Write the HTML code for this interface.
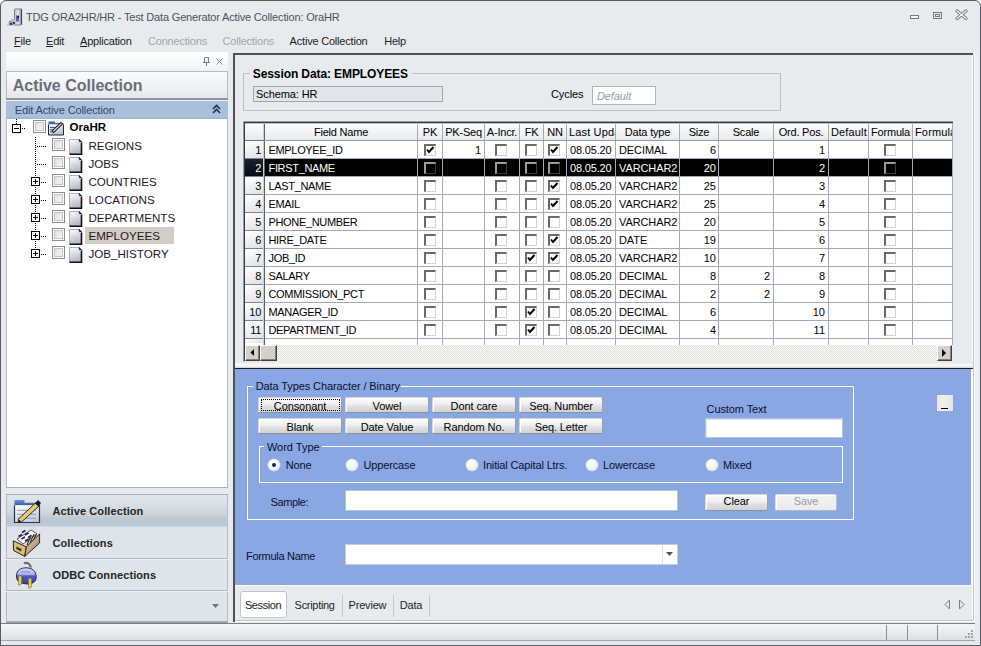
<!DOCTYPE html>
<html><head><meta charset="utf-8"><style>
html,body{margin:0;padding:0;width:981px;height:646px;overflow:hidden;background:#fff}
body{position:relative;font-family:"Liberation Sans", sans-serif}
body div{position:absolute;white-space:nowrap}
u{text-decoration:underline;text-underline-offset:1px}
</style></head><body>
<div style="left:0;top:0;width:979px;height:644px;border:1px solid #585c62;border-radius:6px 6px 0 0;background:#e8ebee"></div>
<svg style="position:absolute;left:4px;top:6px" width="22" height="22" viewBox="0 0 22 22">
<defs><linearGradient id="tig" x1="0" y1="0" x2="1" y2="0"><stop offset="0" stop-color="#b8bcc4"/><stop offset="0.5" stop-color="#e6e8ec"/><stop offset="1" stop-color="#9a9ea8"/></linearGradient></defs>
<path d="M10.5 3.5 L11.5 3 H17.5 V18.5 L16.5 19 H10.5 Z" fill="url(#tig)" stroke="#7a7e86" stroke-width="1"/>
<path d="M17.5 3.5 V18.5" stroke="#404450" stroke-width="1.2"/>
<path d="M12 9.5 H15 V15.5 H12 Z" fill="#5a4ab8" opacity="0.9"/>
<path d="M13.5 10 H15 V12 H13.5 Z" fill="#1a1440"/>
<path d="M3 18 L6 14 H11 V20 H3 Z" fill="#c8ccc8"/>
<path d="M5 15 H10 V19 H5 Z" fill="#8a94a8"/>
<path d="M7 13 H11 V16 H7 Z" fill="#a8c0d8"/>
<path d="M6 17 H8 V19 H6 Z M9 16 H11 V18 H9 Z" fill="#3a4050"/>
</svg>
<div style="left:26px;top:11.69px;font-size:11px;line-height:11px;color:#4c5160;letter-spacing:-0.17px;">TDG ORA2HR/HR - Test Data Generator Active Collection: OraHR</div>
<svg style="position:absolute;left:905px;top:8px" width="70" height="14" viewBox="0 0 70 14">
<rect x="5.5" y="7.5" width="8" height="3" fill="#fff" stroke="#767a82" stroke-width="1"/>
<rect x="28.5" y="4.5" width="8" height="6" fill="none" stroke="#767a82" stroke-width="1"/>
<rect x="30.5" y="6.5" width="4" height="2" fill="none" stroke="#767a82" stroke-width="1"/>
<path d="M52 3 L61 10.5 M61 3 L52 10.5" stroke="#7a7e86" stroke-width="3.2" stroke-linecap="round"/>
<path d="M52 3 L61 10.5 M61 3 L52 10.5" stroke="#f4f5f6" stroke-width="1.2" stroke-linecap="round"/>
</svg>
<div style="left:14px;top:35.69px;font-size:11px;line-height:11px;color:#1c1c1c;letter-spacing:-0.2px;"><u>F</u>ile</div>
<div style="left:46px;top:35.69px;font-size:11px;line-height:11px;color:#1c1c1c;letter-spacing:-0.2px;"><u>E</u>dit</div>
<div style="left:80px;top:35.69px;font-size:11px;line-height:11px;color:#1c1c1c;letter-spacing:-0.2px;"><u>A</u>pplication</div>
<div style="left:148px;top:35.69px;font-size:11px;line-height:11px;color:#a2a6ac;letter-spacing:-0.2px;">Connections</div>
<div style="left:222.5px;top:35.69px;font-size:11px;line-height:11px;color:#a2a6ac;letter-spacing:-0.2px;">Collections</div>
<div style="left:289.6px;top:35.69px;font-size:11px;line-height:11px;color:#1c1c1c;letter-spacing:-0.2px;">Active Collection</div>
<div style="left:384.2px;top:35.69px;font-size:11px;line-height:11px;color:#1c1c1c;letter-spacing:-0.2px;">Help</div>
<div style="left:6px;top:52px;width:222px;height:19px;background:linear-gradient(#ffffff,#f6f7f9 60%,#eef0f3)"></div>
<svg style="position:absolute;left:202px;top:57px" width="24" height="10" viewBox="0 0 24 10">
<path d="M2.5 0.5 H6.5 V5.5 H2.5 Z" fill="none" stroke="#7a7e86"/>
<path d="M1 5.5 H8" stroke="#7a7e86"/>
<path d="M4.5 6 V9" stroke="#7a7e86"/>
<path d="M14.5 1.5 L20.5 7.5 M20.5 1.5 L14.5 7.5" stroke="#8a8e96" stroke-width="1"/>
</svg>
<div style="left:6px;top:71px;width:220px;height:27px;border:1px solid #b6bbc2;border-bottom:none;background:linear-gradient(#fbfbfc,#eef0f3 60%,#e2e5e9)"></div>
<div style="left:12.7px;top:78.46px;font-size:16px;line-height:16px;color:#6a6e78;font-weight:bold;">Active Collection</div>
<div style="left:6px;top:98px;width:222px;height:2px;background:linear-gradient(#9aa0a8,#80868e)"></div>
<div style="left:6px;top:100px;width:222px;height:1px;background:#f4f8fc"></div>
<div style="left:6px;top:101px;width:222px;height:18px;background:linear-gradient(#a2bad8,#a9c0dc 8%,#a9c0dc 85%,#9fb6d4)"></div>
<div style="left:14.7px;top:104.69px;font-size:11px;line-height:11px;color:#34466c;letter-spacing:-0.12px;">Edit Active Collection</div>
<svg style="position:absolute;left:212px;top:104px" width="10" height="10" viewBox="0 0 10 10">
<path d="M1 5 L4.5 1.5 L8 5 M1 9 L4.5 5.5 L8 9" fill="none" stroke="#1e2e4e" stroke-width="1.6"/>
</svg>
<div style="left:6px;top:119px;width:222px;height:368px;background:#fff;border-left:1px solid #b8bcc2;border-right:1px solid #b8bcc2;box-sizing:border-box"></div>
<div style="left:16px;top:119px;width:1px;height:5px;background:repeating-linear-gradient(#000 0 1px,transparent 1px 2px)"></div>
<div style="left:12px;top:124px;width:7px;height:7px;border:1px solid #000;background:#fff"></div>
<div style="left:14px;top:128px;width:5px;height:1px;background:#000"></div>
<div style="left:22px;top:128px;width:4px;height:1px;background:repeating-linear-gradient(90deg,#000 0 1px,transparent 1px 2px)"></div>
<div style="left:33px;top:120px;width:11px;height:11px;border:1px solid #8e8e8e;background:#fdfdfd"></div>
<div style="left:35px;top:122px;width:7px;height:7px;border:1px solid #c4c4c4;background:linear-gradient(135deg,#e2e2e4,#f4f4f6)"></div>
<svg style="position:absolute;left:48px;top:121px" width="17" height="15" viewBox="0 0 17 15">
<defs><linearGradient id="rtg" x1="0" y1="0" x2="0.5" y2="1"><stop offset="0" stop-color="#ffffff"/><stop offset="1" stop-color="#b8c2d6"/></linearGradient></defs>
<path d="M0.5 0.5 H7 V2 H15.5 V3.5 H0.5 Z" fill="#3f64a8"/>
<rect x="0.5" y="3.5" width="15" height="10.5" fill="url(#rtg)"/>
<path d="M0.5 3.5 V14 H15.5 V3.5" fill="none" stroke="#1e2640" stroke-width="1"/>
<path d="M2 6.5 H9 M2 8.7 H8 M2 10.8 H7" stroke="#4a5a80" stroke-width="1"/>
<path d="M4.5 11 L14 2" stroke="#202020" stroke-width="3.2"/>
<path d="M5.2 10.3 L13.4 2.6" stroke="#e2dcaa" stroke-width="1.3"/>
</svg>
<div style="left:69.5px;top:122.27px;font-size:11.5px;line-height:11.5px;color:#000;font-weight:bold;letter-spacing:0.05px;">OraHR</div>
<div style="left:35px;top:137px;width:1px;height:117px;background:repeating-linear-gradient(#000 0 1px,transparent 1px 2px)"></div>
<div style="left:37px;top:146px;width:10px;height:1px;background:repeating-linear-gradient(90deg,#000 0 1px,transparent 1px 2px)"></div>
<div style="left:52px;top:138px;width:11px;height:11px;border:1px solid #8e8e8e;background:#fdfdfd"></div>
<div style="left:54px;top:140px;width:7px;height:7px;border:1px solid #c4c4c4;background:linear-gradient(135deg,#e2e2e4,#f4f4f6)"></div>
<svg style="position:absolute;left:69px;top:139px" width="14" height="16" viewBox="0 0 14 16">
<defs><linearGradient id="dg69139" x1="0" y1="0" x2="0.3" y2="1"><stop offset="0" stop-color="#ffffff"/><stop offset="1" stop-color="#b4bac8"/></linearGradient></defs>
<path d="M0.5 0.5 H9.5 L12.5 3.5 V15 H0.5 Z" fill="url(#dg69139)"/>
<path d="M0.5 15 V0.5 H9.5" fill="none" stroke="#b0b0b4" stroke-width="1"/>
<path d="M9.5 0.5 L12.5 3.5 V15.2 H0.5" fill="none" stroke="#101018" stroke-width="1.6"/>
<path d="M9.5 0.5 V3.5 H12.5" fill="none" stroke="#c8ccd8" stroke-width="1"/>
</svg>
<div style="left:88.4px;top:140.18px;font-size:11.6px;line-height:11.6px;color:#1e1626;letter-spacing:0.02px;">REGIONS</div>
<div style="left:37px;top:164px;width:10px;height:1px;background:repeating-linear-gradient(90deg,#000 0 1px,transparent 1px 2px)"></div>
<div style="left:52px;top:156px;width:11px;height:11px;border:1px solid #8e8e8e;background:#fdfdfd"></div>
<div style="left:54px;top:158px;width:7px;height:7px;border:1px solid #c4c4c4;background:linear-gradient(135deg,#e2e2e4,#f4f4f6)"></div>
<svg style="position:absolute;left:69px;top:157px" width="14" height="16" viewBox="0 0 14 16">
<defs><linearGradient id="dg69157" x1="0" y1="0" x2="0.3" y2="1"><stop offset="0" stop-color="#ffffff"/><stop offset="1" stop-color="#b4bac8"/></linearGradient></defs>
<path d="M0.5 0.5 H9.5 L12.5 3.5 V15 H0.5 Z" fill="url(#dg69157)"/>
<path d="M0.5 15 V0.5 H9.5" fill="none" stroke="#b0b0b4" stroke-width="1"/>
<path d="M9.5 0.5 L12.5 3.5 V15.2 H0.5" fill="none" stroke="#101018" stroke-width="1.6"/>
<path d="M9.5 0.5 V3.5 H12.5" fill="none" stroke="#c8ccd8" stroke-width="1"/>
</svg>
<div style="left:88.4px;top:158.18px;font-size:11.6px;line-height:11.6px;color:#1e1626;letter-spacing:0.02px;">JOBS</div>
<div style="left:31px;top:177px;width:7px;height:7px;border:1px solid #000;background:#fff"></div>
<div style="left:33px;top:181px;width:5px;height:1px;background:#000"></div>
<div style="left:35px;top:179px;width:1px;height:5px;background:#000"></div>
<div style="left:41px;top:182px;width:6px;height:1px;background:repeating-linear-gradient(90deg,#000 0 1px,transparent 1px 2px)"></div>
<div style="left:52px;top:174px;width:11px;height:11px;border:1px solid #8e8e8e;background:#fdfdfd"></div>
<div style="left:54px;top:176px;width:7px;height:7px;border:1px solid #c4c4c4;background:linear-gradient(135deg,#e2e2e4,#f4f4f6)"></div>
<svg style="position:absolute;left:69px;top:175px" width="14" height="16" viewBox="0 0 14 16">
<defs><linearGradient id="dg69175" x1="0" y1="0" x2="0.3" y2="1"><stop offset="0" stop-color="#ffffff"/><stop offset="1" stop-color="#b4bac8"/></linearGradient></defs>
<path d="M0.5 0.5 H9.5 L12.5 3.5 V15 H0.5 Z" fill="url(#dg69175)"/>
<path d="M0.5 15 V0.5 H9.5" fill="none" stroke="#b0b0b4" stroke-width="1"/>
<path d="M9.5 0.5 L12.5 3.5 V15.2 H0.5" fill="none" stroke="#101018" stroke-width="1.6"/>
<path d="M9.5 0.5 V3.5 H12.5" fill="none" stroke="#c8ccd8" stroke-width="1"/>
</svg>
<div style="left:88.4px;top:176.18px;font-size:11.6px;line-height:11.6px;color:#1e1626;letter-spacing:0.02px;">COUNTRIES</div>
<div style="left:31px;top:195px;width:7px;height:7px;border:1px solid #000;background:#fff"></div>
<div style="left:33px;top:199px;width:5px;height:1px;background:#000"></div>
<div style="left:35px;top:197px;width:1px;height:5px;background:#000"></div>
<div style="left:41px;top:200px;width:6px;height:1px;background:repeating-linear-gradient(90deg,#000 0 1px,transparent 1px 2px)"></div>
<div style="left:52px;top:192px;width:11px;height:11px;border:1px solid #8e8e8e;background:#fdfdfd"></div>
<div style="left:54px;top:194px;width:7px;height:7px;border:1px solid #c4c4c4;background:linear-gradient(135deg,#e2e2e4,#f4f4f6)"></div>
<svg style="position:absolute;left:69px;top:193px" width="14" height="16" viewBox="0 0 14 16">
<defs><linearGradient id="dg69193" x1="0" y1="0" x2="0.3" y2="1"><stop offset="0" stop-color="#ffffff"/><stop offset="1" stop-color="#b4bac8"/></linearGradient></defs>
<path d="M0.5 0.5 H9.5 L12.5 3.5 V15 H0.5 Z" fill="url(#dg69193)"/>
<path d="M0.5 15 V0.5 H9.5" fill="none" stroke="#b0b0b4" stroke-width="1"/>
<path d="M9.5 0.5 L12.5 3.5 V15.2 H0.5" fill="none" stroke="#101018" stroke-width="1.6"/>
<path d="M9.5 0.5 V3.5 H12.5" fill="none" stroke="#c8ccd8" stroke-width="1"/>
</svg>
<div style="left:88.4px;top:194.18px;font-size:11.6px;line-height:11.6px;color:#1e1626;letter-spacing:0.02px;">LOCATIONS</div>
<div style="left:31px;top:213px;width:7px;height:7px;border:1px solid #000;background:#fff"></div>
<div style="left:33px;top:217px;width:5px;height:1px;background:#000"></div>
<div style="left:35px;top:215px;width:1px;height:5px;background:#000"></div>
<div style="left:41px;top:218px;width:6px;height:1px;background:repeating-linear-gradient(90deg,#000 0 1px,transparent 1px 2px)"></div>
<div style="left:52px;top:210px;width:11px;height:11px;border:1px solid #8e8e8e;background:#fdfdfd"></div>
<div style="left:54px;top:212px;width:7px;height:7px;border:1px solid #c4c4c4;background:linear-gradient(135deg,#e2e2e4,#f4f4f6)"></div>
<svg style="position:absolute;left:69px;top:211px" width="14" height="16" viewBox="0 0 14 16">
<defs><linearGradient id="dg69211" x1="0" y1="0" x2="0.3" y2="1"><stop offset="0" stop-color="#ffffff"/><stop offset="1" stop-color="#b4bac8"/></linearGradient></defs>
<path d="M0.5 0.5 H9.5 L12.5 3.5 V15 H0.5 Z" fill="url(#dg69211)"/>
<path d="M0.5 15 V0.5 H9.5" fill="none" stroke="#b0b0b4" stroke-width="1"/>
<path d="M9.5 0.5 L12.5 3.5 V15.2 H0.5" fill="none" stroke="#101018" stroke-width="1.6"/>
<path d="M9.5 0.5 V3.5 H12.5" fill="none" stroke="#c8ccd8" stroke-width="1"/>
</svg>
<div style="left:88.4px;top:212.18px;font-size:11.6px;line-height:11.6px;color:#1e1626;letter-spacing:0.02px;">DEPARTMENTS</div>
<div style="left:31px;top:231px;width:7px;height:7px;border:1px solid #000;background:#fff"></div>
<div style="left:33px;top:235px;width:5px;height:1px;background:#000"></div>
<div style="left:35px;top:233px;width:1px;height:5px;background:#000"></div>
<div style="left:41px;top:236px;width:6px;height:1px;background:repeating-linear-gradient(90deg,#000 0 1px,transparent 1px 2px)"></div>
<div style="left:52px;top:228px;width:11px;height:11px;border:1px solid #8e8e8e;background:#fdfdfd"></div>
<div style="left:54px;top:230px;width:7px;height:7px;border:1px solid #c4c4c4;background:linear-gradient(135deg,#e2e2e4,#f4f4f6)"></div>
<svg style="position:absolute;left:69px;top:229px" width="14" height="16" viewBox="0 0 14 16">
<defs><linearGradient id="dg69229" x1="0" y1="0" x2="0.3" y2="1"><stop offset="0" stop-color="#ffffff"/><stop offset="1" stop-color="#b4bac8"/></linearGradient></defs>
<path d="M0.5 0.5 H9.5 L12.5 3.5 V15 H0.5 Z" fill="url(#dg69229)"/>
<path d="M0.5 15 V0.5 H9.5" fill="none" stroke="#b0b0b4" stroke-width="1"/>
<path d="M9.5 0.5 L12.5 3.5 V15.2 H0.5" fill="none" stroke="#101018" stroke-width="1.6"/>
<path d="M9.5 0.5 V3.5 H12.5" fill="none" stroke="#c8ccd8" stroke-width="1"/>
</svg>
<div style="left:85px;top:227px;width:89px;height:17px;background:#d2cec6"></div>
<div style="left:88.4px;top:230.18px;font-size:11.6px;line-height:11.6px;color:#1e1626;letter-spacing:0.02px;">EMPLOYEES</div>
<div style="left:31px;top:249px;width:7px;height:7px;border:1px solid #000;background:#fff"></div>
<div style="left:33px;top:253px;width:5px;height:1px;background:#000"></div>
<div style="left:35px;top:251px;width:1px;height:5px;background:#000"></div>
<div style="left:41px;top:254px;width:6px;height:1px;background:repeating-linear-gradient(90deg,#000 0 1px,transparent 1px 2px)"></div>
<div style="left:52px;top:246px;width:11px;height:11px;border:1px solid #8e8e8e;background:#fdfdfd"></div>
<div style="left:54px;top:248px;width:7px;height:7px;border:1px solid #c4c4c4;background:linear-gradient(135deg,#e2e2e4,#f4f4f6)"></div>
<svg style="position:absolute;left:69px;top:247px" width="14" height="16" viewBox="0 0 14 16">
<defs><linearGradient id="dg69247" x1="0" y1="0" x2="0.3" y2="1"><stop offset="0" stop-color="#ffffff"/><stop offset="1" stop-color="#b4bac8"/></linearGradient></defs>
<path d="M0.5 0.5 H9.5 L12.5 3.5 V15 H0.5 Z" fill="url(#dg69247)"/>
<path d="M0.5 15 V0.5 H9.5" fill="none" stroke="#b0b0b4" stroke-width="1"/>
<path d="M9.5 0.5 L12.5 3.5 V15.2 H0.5" fill="none" stroke="#101018" stroke-width="1.6"/>
<path d="M9.5 0.5 V3.5 H12.5" fill="none" stroke="#c8ccd8" stroke-width="1"/>
</svg>
<div style="left:88.4px;top:248.18px;font-size:11.6px;line-height:11.6px;color:#1e1626;letter-spacing:0.02px;">JOB_HISTORY</div>
<div style="left:6px;top:487px;width:222px;height:135px;background:#dfe4ea;border-left:1px solid #b8bcc2;border-right:1px solid #b8bcc2;box-sizing:border-box"></div>
<div style="left:6px;top:487px;width:222px;height:7px;background:#e6e9ed"></div>
<div style="left:6px;top:487px;width:222px;height:1px;background:#a8aeb6"></div>
<div style="left:6px;top:494px;width:222px;height:1px;background:#a8aeb6"></div>
<div style="left:7px;top:495px;width:220px;height:32px;background:linear-gradient(#e2e6eb,#d6dde4 35%,#cdd5dd 60%,#c8cacc 68%,#b9c8d4 80%,#bccad6 97%,#dfe6ec)"></div>
<div style="left:6px;top:558px;width:222px;height:1px;background:#b0b6be"></div>
<div style="left:6px;top:559px;width:222px;height:1px;background:#eef2f6"></div>
<div style="left:6px;top:590px;width:222px;height:1px;background:#b0b6be"></div>
<div style="left:6px;top:591px;width:222px;height:1px;background:#eef2f6"></div>
<div style="left:6px;top:621px;width:222px;height:2px;background:linear-gradient(#b4bac2,#8c9298)"></div>
<div style="left:52.5px;top:505.69px;font-size:11px;line-height:11px;color:#242424;font-weight:bold;letter-spacing:0.1px;">Active Collection</div>
<div style="left:52.5px;top:537.69px;font-size:11px;line-height:11px;color:#242424;font-weight:bold;letter-spacing:0.1px;">Collections</div>
<div style="left:52.5px;top:569.69px;font-size:11px;line-height:11px;color:#242424;font-weight:bold;letter-spacing:0.1px;">ODBC Connections</div>
<svg style="position:absolute;left:13px;top:498px" width="28" height="26" viewBox="0 0 28 26">
<defs><linearGradient id="ic1" x1="0" y1="0" x2="0.6" y2="1"><stop offset="0" stop-color="#ffffff"/><stop offset="1" stop-color="#c4ccda"/></linearGradient>
<linearGradient id="ic1b" x1="0" y1="0" x2="0" y2="1"><stop offset="0" stop-color="#6a94d4"/><stop offset="1" stop-color="#3a5aa0"/></linearGradient></defs>
<path d="M1.5 2 H11.5 V4.7 H26.5 V7.3 H1.5 Z" fill="url(#ic1b)"/>
<rect x="1.5" y="7.3" width="25" height="17.2" fill="url(#ic1)"/>
<path d="M1.5 7.3 V24.5 H26.5 V7.3" fill="none" stroke="#2c3444" stroke-width="1.2"/>
<path d="M4 12.3 H23 M4 16.3 H23 M4 20.2 H23" stroke="#8a9cc0" stroke-width="1"/>
<path d="M5 21.5 L23 4.5 L26.5 7.5 L8.5 24 Z" fill="#e6cc6a" stroke="#2a2a2a" stroke-width="1"/>
<path d="M5 21.5 L8.5 24 L4.5 25 Z" fill="#2a2a2a"/>
<path d="M22 5.5 L25 2 L28 5 L25.5 8.5 Z" fill="#1a1a1a"/>
</svg>
<svg style="position:absolute;left:8px;top:526px" width="36" height="36" viewBox="0 0 36 36">
<defs><linearGradient id="ic2" x1="0" y1="0" x2="1" y2="1"><stop offset="0" stop-color="#dcc488"/><stop offset="0.5" stop-color="#c8a888"/><stop offset="1" stop-color="#7a68a0"/></linearGradient></defs>
<path d="M9 13 L23 4 L29 8 L15 18 Z" fill="#ffffff" stroke="#303040" stroke-width="0.8"/>
<path d="M10.5 10.5 L14 8.5 M14 6.5 L17.5 4.5 M13.5 13 L17 11 M17 9 L20.5 7 M17 15 L20.5 13 M20 11.5 L23.5 9.5" stroke="#202040" stroke-width="1.6"/>
<path d="M19 19 L23 9 M22 17 L26 8 M25 15 L28.5 8" stroke="#303030" stroke-width="1.2"/>
<path d="M5.3 14.8 L18.4 20.9 L16.7 30.4 L5.6 24.5 Z" fill="#dcbc78" stroke="#2a2418" stroke-width="1"/>
<path d="M18.4 20.9 L31.6 8 L31.6 17 L16.7 30.4 Z" fill="url(#ic2)" stroke="#2a2418" stroke-width="1"/>
<path d="M8.4 20.5 L13.4 23 L13.4 25.5 L8.4 23 Z" fill="#3a3020"/>
</svg>
<svg style="position:absolute;left:8px;top:558px" width="36" height="36" viewBox="0 0 36 36">
<defs><linearGradient id="ic3" x1="0" y1="0" x2="0" y2="1"><stop offset="0" stop-color="#d4d6f4"/><stop offset="0.4" stop-color="#b0b4e8"/><stop offset="0.5" stop-color="#5058c0"/><stop offset="1" stop-color="#3840a0"/></linearGradient></defs>
<path d="M16 5.5 C19 3.5 22 6 23 9.5" fill="none" stroke="#6a6e70" stroke-width="2.2"/>
<path d="M8.5 18 C8.5 12 13 9.8 18 9.8 C24 9.8 28.2 13 28.2 19 C28.2 23.5 25 26 19 26 L13 25 C10 24 8.5 22 8.5 18 Z" fill="url(#ic3)" stroke="#242870" stroke-width="1"/>
<path d="M13 14 H22" stroke="#8088c8" stroke-width="1"/>
<path d="M10.5 18 H13.5 V26 L12 27 H10.5 Z" fill="#e8d050" stroke="#8a7020" stroke-width="0.6"/>
<path d="M20.5 20.5 H23.5 V29 L22 30 H20.5 Z" fill="#e8d050" stroke="#8a7020" stroke-width="0.6"/>
</svg>
<svg style="position:absolute;left:212px;top:604px" width="8" height="5" viewBox="0 0 8 5"><path d="M0 0 H7 L3.5 4 Z" fill="#70747c"/></svg>
<div style="left:233px;top:53px;width:740px;height:569px;border-left:2px solid #4e5258;border-top:2px solid #4e5258;box-sizing:border-box;background:#e8ebee"></div>
<div style="left:972px;top:55px;width:1px;height:565px;background:#fbfbfc"></div>
<div style="left:973px;top:55px;width:1px;height:565px;background:#c2c4c8"></div>
<div style="left:974px;top:53px;width:1px;height:569px;background:#fbfbfc"></div>
<div style="left:975px;top:53px;width:4px;height:570px;background:#eceef1"></div>
<div style="left:235px;top:620px;width:738px;height:1px;background:#c2c4c8"></div>
<div style="left:235px;top:621px;width:740px;height:1px;background:#fbfbfc"></div>
<div style="left:243px;top:73px;width:538px;height:38px;border:1px solid #bcc0c6;box-sizing:border-box"></div>
<div style="left:250px;top:66px;width:162px;height:12px;background:#e8ebee"></div>
<div style="left:252.8px;top:67.84px;font-size:12px;line-height:12px;color:#000;font-weight:bold;letter-spacing:-0.1px;">Session Data: EMPLOYEES</div>
<div style="left:253px;top:86px;width:190px;height:16px;border:1px solid #a0a6ae;background:#e2e5e9;box-sizing:border-box"></div>
<div style="left:256px;top:88.69px;font-size:11px;line-height:11px;color:#000;letter-spacing:-0.1px;">Schema: HR</div>
<div style="left:551px;top:88.69px;font-size:11px;line-height:11px;color:#000;letter-spacing:-0.1px;">Cycles</div>
<div style="left:592px;top:86px;width:64px;height:19px;border:1px solid #b0b4ba;background:#fff;box-sizing:border-box"></div>
<div style="left:597px;top:90.69px;font-size:11px;line-height:11px;color:#9a9ea6;letter-spacing:-0.1px;"><i>Default</i></div>
<div style="left:244px;top:122px;width:709px;height:223px;background:#fff"></div>
<div style="left:245px;top:123px;width:707px;height:17px;background:linear-gradient(#ffffff,#f4f5f7 45%,#e6e9ec)"></div>
<div style="left:245px;top:141px;width:18px;height:17px;background:linear-gradient(160deg,#ffffff,#eef0f3 50%,#dde1e7)"></div>
<div style="left:245px;top:159px;width:18px;height:17px;background:linear-gradient(#1c2230,#080a10)"></div>
<div style="left:245px;top:177px;width:18px;height:17px;background:linear-gradient(160deg,#ffffff,#eef0f3 50%,#dde1e7)"></div>
<div style="left:245px;top:195px;width:18px;height:17px;background:linear-gradient(160deg,#ffffff,#eef0f3 50%,#dde1e7)"></div>
<div style="left:245px;top:213px;width:18px;height:17px;background:linear-gradient(160deg,#ffffff,#eef0f3 50%,#dde1e7)"></div>
<div style="left:245px;top:231px;width:18px;height:17px;background:linear-gradient(160deg,#ffffff,#eef0f3 50%,#dde1e7)"></div>
<div style="left:245px;top:249px;width:18px;height:17px;background:linear-gradient(160deg,#ffffff,#eef0f3 50%,#dde1e7)"></div>
<div style="left:245px;top:267px;width:18px;height:17px;background:linear-gradient(160deg,#ffffff,#eef0f3 50%,#dde1e7)"></div>
<div style="left:245px;top:285px;width:18px;height:17px;background:linear-gradient(160deg,#ffffff,#eef0f3 50%,#dde1e7)"></div>
<div style="left:245px;top:303px;width:18px;height:17px;background:linear-gradient(160deg,#ffffff,#eef0f3 50%,#dde1e7)"></div>
<div style="left:245px;top:321px;width:18px;height:17px;background:linear-gradient(160deg,#ffffff,#eef0f3 50%,#dde1e7)"></div>
<div style="left:245px;top:339px;width:18px;height:4px;background:linear-gradient(160deg,#ffffff,#eef0f3 50%,#dde1e7)"></div>
<div style="left:264px;top:159px;width:688px;height:17px;background:#000"></div>
<div style="left:264px;top:140px;width:688px;height:1px;background:#a4abb8"></div>
<div style="left:245px;top:140px;width:18px;height:1px;background:#7c8490"></div>
<div style="left:264px;top:158px;width:688px;height:1px;background:#a4abb8"></div>
<div style="left:245px;top:158px;width:18px;height:1px;background:#7c8490"></div>
<div style="left:264px;top:176px;width:688px;height:1px;background:#a4abb8"></div>
<div style="left:245px;top:176px;width:18px;height:1px;background:#7c8490"></div>
<div style="left:264px;top:194px;width:688px;height:1px;background:#a4abb8"></div>
<div style="left:245px;top:194px;width:18px;height:1px;background:#7c8490"></div>
<div style="left:264px;top:212px;width:688px;height:1px;background:#a4abb8"></div>
<div style="left:245px;top:212px;width:18px;height:1px;background:#7c8490"></div>
<div style="left:264px;top:230px;width:688px;height:1px;background:#a4abb8"></div>
<div style="left:245px;top:230px;width:18px;height:1px;background:#7c8490"></div>
<div style="left:264px;top:248px;width:688px;height:1px;background:#a4abb8"></div>
<div style="left:245px;top:248px;width:18px;height:1px;background:#7c8490"></div>
<div style="left:264px;top:266px;width:688px;height:1px;background:#a4abb8"></div>
<div style="left:245px;top:266px;width:18px;height:1px;background:#7c8490"></div>
<div style="left:264px;top:284px;width:688px;height:1px;background:#a4abb8"></div>
<div style="left:245px;top:284px;width:18px;height:1px;background:#7c8490"></div>
<div style="left:264px;top:302px;width:688px;height:1px;background:#a4abb8"></div>
<div style="left:245px;top:302px;width:18px;height:1px;background:#7c8490"></div>
<div style="left:264px;top:320px;width:688px;height:1px;background:#a4abb8"></div>
<div style="left:245px;top:320px;width:18px;height:1px;background:#7c8490"></div>
<div style="left:264px;top:338px;width:688px;height:1px;background:#a4abb8"></div>
<div style="left:245px;top:338px;width:18px;height:1px;background:#7c8490"></div>
<div style="left:417px;top:123px;width:1px;height:222px;background:#a4abb8"></div>
<div style="left:442px;top:123px;width:1px;height:222px;background:#a4abb8"></div>
<div style="left:484px;top:123px;width:1px;height:222px;background:#a4abb8"></div>
<div style="left:519px;top:123px;width:1px;height:222px;background:#a4abb8"></div>
<div style="left:543px;top:123px;width:1px;height:222px;background:#a4abb8"></div>
<div style="left:566px;top:123px;width:1px;height:222px;background:#a4abb8"></div>
<div style="left:615px;top:123px;width:1px;height:222px;background:#a4abb8"></div>
<div style="left:679px;top:123px;width:1px;height:222px;background:#a4abb8"></div>
<div style="left:718px;top:123px;width:1px;height:222px;background:#a4abb8"></div>
<div style="left:773px;top:123px;width:1px;height:222px;background:#a4abb8"></div>
<div style="left:828px;top:123px;width:1px;height:222px;background:#a4abb8"></div>
<div style="left:868px;top:123px;width:1px;height:222px;background:#a4abb8"></div>
<div style="left:912px;top:123px;width:1px;height:222px;background:#a4abb8"></div>
<div style="left:952px;top:123px;width:1px;height:222px;background:#a4abb8"></div>
<div style="left:263px;top:123px;width:1px;height:222px;background:#c8cdd6"></div>
<div style="left:264px;top:123px;width:1px;height:222px;background:#5a6270"></div>
<div style="left:245px;top:140px;width:19px;height:1px;background:#6c727c"></div>
<div style="left:264px;top:140px;width:688px;height:1px;background:#949ba6"></div>
<div style="left:243px;top:121px;width:710px;height:1px;background:#9a9ea4"></div>
<div style="left:243px;top:121px;width:1px;height:241px;background:#9a9ea4"></div>
<div style="left:244px;top:122px;width:709px;height:1px;background:#34383e"></div>
<div style="left:244px;top:122px;width:1px;height:239px;background:#34383e"></div>
<div style="left:245px;top:123px;width:707px;height:1px;background:#c0c4ca"></div>
<div style="left:265px;top:126.69px;font-size:11px;line-height:11px;color:#000;letter-spacing:-0.2px;white-space:nowrap;width:152px;text-align:center;">Field Name</div>
<div style="left:418px;top:126.69px;font-size:11px;line-height:11px;color:#000;letter-spacing:-0.2px;white-space:nowrap;width:24px;text-align:center;">PK</div>
<div style="left:443px;top:126.69px;font-size:11px;line-height:11px;color:#000;letter-spacing:-0.2px;white-space:nowrap;width:41px;text-align:center;">PK-Seq</div>
<div style="left:485px;top:126.69px;font-size:11px;line-height:11px;color:#000;letter-spacing:-0.2px;white-space:nowrap;width:34px;text-align:center;">A-Incr.</div>
<div style="left:520px;top:126.69px;font-size:11px;line-height:11px;color:#000;letter-spacing:-0.2px;white-space:nowrap;width:23px;text-align:center;">FK</div>
<div style="left:544px;top:126.69px;font-size:11px;line-height:11px;color:#000;letter-spacing:-0.2px;white-space:nowrap;width:22px;text-align:center;">NN</div>
<div style="left:567px;top:123px;width:48px;height:17px;overflow:hidden"><div style="left:2px;top:3.69px;font-size:11px;line-height:11px;color:#000;letter-spacing:0.15px;white-space:nowrap;">Last Update</div></div>
<div style="left:616px;top:126.69px;font-size:11px;line-height:11px;color:#000;letter-spacing:-0.2px;white-space:nowrap;width:63px;text-align:center;">Data type</div>
<div style="left:680px;top:126.69px;font-size:11px;line-height:11px;color:#000;letter-spacing:-0.2px;white-space:nowrap;width:38px;text-align:center;">Size</div>
<div style="left:719px;top:126.69px;font-size:11px;line-height:11px;color:#000;letter-spacing:-0.2px;white-space:nowrap;width:54px;text-align:center;">Scale</div>
<div style="left:774px;top:126.69px;font-size:11px;line-height:11px;color:#000;letter-spacing:-0.2px;white-space:nowrap;width:54px;text-align:center;">Ord. Pos.</div>
<div style="left:829px;top:123px;width:39px;height:17px;overflow:hidden"><div style="left:2px;top:3.69px;font-size:11px;line-height:11px;color:#000;letter-spacing:0.15px;white-space:nowrap;">Default</div></div>
<div style="left:869px;top:126.69px;font-size:11px;line-height:11px;color:#000;letter-spacing:-0.2px;white-space:nowrap;width:43px;text-align:center;">Formula</div>
<div style="left:913px;top:123px;width:39px;height:17px;overflow:hidden"><div style="left:2px;top:3.69px;font-size:11px;line-height:11px;color:#000;letter-spacing:0.15px;white-space:nowrap;">Formula</div></div>
<div style="left:245px;top:144.69px;font-size:11px;line-height:11px;color:#000;letter-spacing:-0.3px;white-space:nowrap;width:16px;text-align:right;">1</div>
<div style="left:268.5px;top:144.69px;font-size:11px;line-height:11px;color:#000;letter-spacing:-0.33px;white-space:nowrap;">EMPLOYEE_ID</div>
<div style="left:424px;top:144px;width:12px;height:12px;background:#fff;border-top:2px solid #6a6a6a;border-left:2px solid #6a6a6a;border-right:1px solid #d4d4d4;border-bottom:1px solid #d4d4d4;box-sizing:border-box"></div><svg style="position:absolute;left:424px;top:144px" width="12" height="12" viewBox="0 0 12 12"><path d="M3 5.5 L5 8 L9.5 3" fill="none" stroke="#000" stroke-width="2"/></svg>
<div style="left:442px;top:144.69px;font-size:11px;line-height:11px;color:#000;letter-spacing:0px;white-space:nowrap;width:39px;text-align:right;">1</div>
<div style="left:495px;top:144px;width:12px;height:12px;background:#fff;border-top:2px solid #6a6a6a;border-left:2px solid #6a6a6a;border-right:1px solid #d4d4d4;border-bottom:1px solid #d4d4d4;box-sizing:border-box"></div>
<div style="left:525px;top:144px;width:12px;height:12px;background:#fff;border-top:2px solid #6a6a6a;border-left:2px solid #6a6a6a;border-right:1px solid #d4d4d4;border-bottom:1px solid #d4d4d4;box-sizing:border-box"></div>
<div style="left:548px;top:144px;width:12px;height:12px;background:#fff;border-top:2px solid #6a6a6a;border-left:2px solid #6a6a6a;border-right:1px solid #d4d4d4;border-bottom:1px solid #d4d4d4;box-sizing:border-box"></div><svg style="position:absolute;left:548px;top:144px" width="12" height="12" viewBox="0 0 12 12"><path d="M3 5.5 L5 8 L9.5 3" fill="none" stroke="#000" stroke-width="2"/></svg>
<div style="left:570px;top:144.69px;font-size:11px;line-height:11px;color:#000;letter-spacing:-0.17px;white-space:nowrap;">08.05.20</div>
<div style="left:616px;top:141px;width:63px;height:17px;overflow:hidden"><div style="left:3px;top:3.69px;font-size:11px;line-height:11px;color:#000;letter-spacing:-0.1px;white-space:nowrap;">DECIMAL</div></div>
<div style="left:679px;top:144.69px;font-size:11px;line-height:11px;color:#000;letter-spacing:0px;white-space:nowrap;width:37px;text-align:right;">6</div>
<div style="left:773px;top:144.69px;font-size:11px;line-height:11px;color:#000;letter-spacing:0px;white-space:nowrap;width:52px;text-align:right;">1</div>
<div style="left:884px;top:144px;width:12px;height:12px;background:#fff;border-top:2px solid #6a6a6a;border-left:2px solid #6a6a6a;border-right:1px solid #d4d4d4;border-bottom:1px solid #d4d4d4;box-sizing:border-box"></div>
<div style="left:245px;top:162.69px;font-size:11px;line-height:11px;color:#fff;letter-spacing:-0.3px;white-space:nowrap;width:16px;text-align:right;">2</div>
<div style="left:268.5px;top:162.69px;font-size:11px;line-height:11px;color:#fff;letter-spacing:-0.33px;white-space:nowrap;">FIRST_NAME</div>
<div style="left:424px;top:162px;width:12px;height:12px;background:#000;border-top:2px solid #9a9a9a;border-left:2px solid #9a9a9a;border-right:1px solid #3a3a3a;border-bottom:1px solid #3a3a3a;box-sizing:border-box"></div>
<div style="left:495px;top:162px;width:12px;height:12px;background:#000;border-top:2px solid #9a9a9a;border-left:2px solid #9a9a9a;border-right:1px solid #3a3a3a;border-bottom:1px solid #3a3a3a;box-sizing:border-box"></div>
<div style="left:525px;top:162px;width:12px;height:12px;background:#000;border-top:2px solid #9a9a9a;border-left:2px solid #9a9a9a;border-right:1px solid #3a3a3a;border-bottom:1px solid #3a3a3a;box-sizing:border-box"></div>
<div style="left:548px;top:162px;width:12px;height:12px;background:#000;border-top:2px solid #9a9a9a;border-left:2px solid #9a9a9a;border-right:1px solid #3a3a3a;border-bottom:1px solid #3a3a3a;box-sizing:border-box"></div>
<div style="left:570px;top:162.69px;font-size:11px;line-height:11px;color:#fff;letter-spacing:-0.17px;white-space:nowrap;">08.05.20</div>
<div style="left:616px;top:159px;width:63px;height:17px;overflow:hidden"><div style="left:3px;top:3.69px;font-size:11px;line-height:11px;color:#fff;letter-spacing:-0.1px;white-space:nowrap;">VARCHAR2</div></div>
<div style="left:679px;top:162.69px;font-size:11px;line-height:11px;color:#fff;letter-spacing:0px;white-space:nowrap;width:37px;text-align:right;">20</div>
<div style="left:773px;top:162.69px;font-size:11px;line-height:11px;color:#fff;letter-spacing:0px;white-space:nowrap;width:52px;text-align:right;">2</div>
<div style="left:884px;top:162px;width:12px;height:12px;background:#000;border-top:2px solid #9a9a9a;border-left:2px solid #9a9a9a;border-right:1px solid #3a3a3a;border-bottom:1px solid #3a3a3a;box-sizing:border-box"></div>
<div style="left:245px;top:180.69px;font-size:11px;line-height:11px;color:#000;letter-spacing:-0.3px;white-space:nowrap;width:16px;text-align:right;">3</div>
<div style="left:268.5px;top:180.69px;font-size:11px;line-height:11px;color:#000;letter-spacing:-0.33px;white-space:nowrap;">LAST_NAME</div>
<div style="left:424px;top:180px;width:12px;height:12px;background:#fff;border-top:2px solid #6a6a6a;border-left:2px solid #6a6a6a;border-right:1px solid #d4d4d4;border-bottom:1px solid #d4d4d4;box-sizing:border-box"></div>
<div style="left:495px;top:180px;width:12px;height:12px;background:#fff;border-top:2px solid #6a6a6a;border-left:2px solid #6a6a6a;border-right:1px solid #d4d4d4;border-bottom:1px solid #d4d4d4;box-sizing:border-box"></div>
<div style="left:525px;top:180px;width:12px;height:12px;background:#fff;border-top:2px solid #6a6a6a;border-left:2px solid #6a6a6a;border-right:1px solid #d4d4d4;border-bottom:1px solid #d4d4d4;box-sizing:border-box"></div>
<div style="left:548px;top:180px;width:12px;height:12px;background:#fff;border-top:2px solid #6a6a6a;border-left:2px solid #6a6a6a;border-right:1px solid #d4d4d4;border-bottom:1px solid #d4d4d4;box-sizing:border-box"></div><svg style="position:absolute;left:548px;top:180px" width="12" height="12" viewBox="0 0 12 12"><path d="M3 5.5 L5 8 L9.5 3" fill="none" stroke="#000" stroke-width="2"/></svg>
<div style="left:570px;top:180.69px;font-size:11px;line-height:11px;color:#000;letter-spacing:-0.17px;white-space:nowrap;">08.05.20</div>
<div style="left:616px;top:177px;width:63px;height:17px;overflow:hidden"><div style="left:3px;top:3.69px;font-size:11px;line-height:11px;color:#000;letter-spacing:-0.1px;white-space:nowrap;">VARCHAR2</div></div>
<div style="left:679px;top:180.69px;font-size:11px;line-height:11px;color:#000;letter-spacing:0px;white-space:nowrap;width:37px;text-align:right;">25</div>
<div style="left:773px;top:180.69px;font-size:11px;line-height:11px;color:#000;letter-spacing:0px;white-space:nowrap;width:52px;text-align:right;">3</div>
<div style="left:884px;top:180px;width:12px;height:12px;background:#fff;border-top:2px solid #6a6a6a;border-left:2px solid #6a6a6a;border-right:1px solid #d4d4d4;border-bottom:1px solid #d4d4d4;box-sizing:border-box"></div>
<div style="left:245px;top:198.69px;font-size:11px;line-height:11px;color:#000;letter-spacing:-0.3px;white-space:nowrap;width:16px;text-align:right;">4</div>
<div style="left:268.5px;top:198.69px;font-size:11px;line-height:11px;color:#000;letter-spacing:-0.33px;white-space:nowrap;">EMAIL</div>
<div style="left:424px;top:198px;width:12px;height:12px;background:#fff;border-top:2px solid #6a6a6a;border-left:2px solid #6a6a6a;border-right:1px solid #d4d4d4;border-bottom:1px solid #d4d4d4;box-sizing:border-box"></div>
<div style="left:495px;top:198px;width:12px;height:12px;background:#fff;border-top:2px solid #6a6a6a;border-left:2px solid #6a6a6a;border-right:1px solid #d4d4d4;border-bottom:1px solid #d4d4d4;box-sizing:border-box"></div>
<div style="left:525px;top:198px;width:12px;height:12px;background:#fff;border-top:2px solid #6a6a6a;border-left:2px solid #6a6a6a;border-right:1px solid #d4d4d4;border-bottom:1px solid #d4d4d4;box-sizing:border-box"></div>
<div style="left:548px;top:198px;width:12px;height:12px;background:#fff;border-top:2px solid #6a6a6a;border-left:2px solid #6a6a6a;border-right:1px solid #d4d4d4;border-bottom:1px solid #d4d4d4;box-sizing:border-box"></div><svg style="position:absolute;left:548px;top:198px" width="12" height="12" viewBox="0 0 12 12"><path d="M3 5.5 L5 8 L9.5 3" fill="none" stroke="#000" stroke-width="2"/></svg>
<div style="left:570px;top:198.69px;font-size:11px;line-height:11px;color:#000;letter-spacing:-0.17px;white-space:nowrap;">08.05.20</div>
<div style="left:616px;top:195px;width:63px;height:17px;overflow:hidden"><div style="left:3px;top:3.69px;font-size:11px;line-height:11px;color:#000;letter-spacing:-0.1px;white-space:nowrap;">VARCHAR2</div></div>
<div style="left:679px;top:198.69px;font-size:11px;line-height:11px;color:#000;letter-spacing:0px;white-space:nowrap;width:37px;text-align:right;">25</div>
<div style="left:773px;top:198.69px;font-size:11px;line-height:11px;color:#000;letter-spacing:0px;white-space:nowrap;width:52px;text-align:right;">4</div>
<div style="left:884px;top:198px;width:12px;height:12px;background:#fff;border-top:2px solid #6a6a6a;border-left:2px solid #6a6a6a;border-right:1px solid #d4d4d4;border-bottom:1px solid #d4d4d4;box-sizing:border-box"></div>
<div style="left:245px;top:216.69px;font-size:11px;line-height:11px;color:#000;letter-spacing:-0.3px;white-space:nowrap;width:16px;text-align:right;">5</div>
<div style="left:268.5px;top:216.69px;font-size:11px;line-height:11px;color:#000;letter-spacing:-0.33px;white-space:nowrap;">PHONE_NUMBER</div>
<div style="left:424px;top:216px;width:12px;height:12px;background:#fff;border-top:2px solid #6a6a6a;border-left:2px solid #6a6a6a;border-right:1px solid #d4d4d4;border-bottom:1px solid #d4d4d4;box-sizing:border-box"></div>
<div style="left:495px;top:216px;width:12px;height:12px;background:#fff;border-top:2px solid #6a6a6a;border-left:2px solid #6a6a6a;border-right:1px solid #d4d4d4;border-bottom:1px solid #d4d4d4;box-sizing:border-box"></div>
<div style="left:525px;top:216px;width:12px;height:12px;background:#fff;border-top:2px solid #6a6a6a;border-left:2px solid #6a6a6a;border-right:1px solid #d4d4d4;border-bottom:1px solid #d4d4d4;box-sizing:border-box"></div>
<div style="left:548px;top:216px;width:12px;height:12px;background:#fff;border-top:2px solid #6a6a6a;border-left:2px solid #6a6a6a;border-right:1px solid #d4d4d4;border-bottom:1px solid #d4d4d4;box-sizing:border-box"></div>
<div style="left:570px;top:216.69px;font-size:11px;line-height:11px;color:#000;letter-spacing:-0.17px;white-space:nowrap;">08.05.20</div>
<div style="left:616px;top:213px;width:63px;height:17px;overflow:hidden"><div style="left:3px;top:3.69px;font-size:11px;line-height:11px;color:#000;letter-spacing:-0.1px;white-space:nowrap;">VARCHAR2</div></div>
<div style="left:679px;top:216.69px;font-size:11px;line-height:11px;color:#000;letter-spacing:0px;white-space:nowrap;width:37px;text-align:right;">20</div>
<div style="left:773px;top:216.69px;font-size:11px;line-height:11px;color:#000;letter-spacing:0px;white-space:nowrap;width:52px;text-align:right;">5</div>
<div style="left:884px;top:216px;width:12px;height:12px;background:#fff;border-top:2px solid #6a6a6a;border-left:2px solid #6a6a6a;border-right:1px solid #d4d4d4;border-bottom:1px solid #d4d4d4;box-sizing:border-box"></div>
<div style="left:245px;top:234.69px;font-size:11px;line-height:11px;color:#000;letter-spacing:-0.3px;white-space:nowrap;width:16px;text-align:right;">6</div>
<div style="left:268.5px;top:234.69px;font-size:11px;line-height:11px;color:#000;letter-spacing:-0.33px;white-space:nowrap;">HIRE_DATE</div>
<div style="left:424px;top:234px;width:12px;height:12px;background:#fff;border-top:2px solid #6a6a6a;border-left:2px solid #6a6a6a;border-right:1px solid #d4d4d4;border-bottom:1px solid #d4d4d4;box-sizing:border-box"></div>
<div style="left:495px;top:234px;width:12px;height:12px;background:#fff;border-top:2px solid #6a6a6a;border-left:2px solid #6a6a6a;border-right:1px solid #d4d4d4;border-bottom:1px solid #d4d4d4;box-sizing:border-box"></div>
<div style="left:525px;top:234px;width:12px;height:12px;background:#fff;border-top:2px solid #6a6a6a;border-left:2px solid #6a6a6a;border-right:1px solid #d4d4d4;border-bottom:1px solid #d4d4d4;box-sizing:border-box"></div>
<div style="left:548px;top:234px;width:12px;height:12px;background:#fff;border-top:2px solid #6a6a6a;border-left:2px solid #6a6a6a;border-right:1px solid #d4d4d4;border-bottom:1px solid #d4d4d4;box-sizing:border-box"></div><svg style="position:absolute;left:548px;top:234px" width="12" height="12" viewBox="0 0 12 12"><path d="M3 5.5 L5 8 L9.5 3" fill="none" stroke="#000" stroke-width="2"/></svg>
<div style="left:570px;top:234.69px;font-size:11px;line-height:11px;color:#000;letter-spacing:-0.17px;white-space:nowrap;">08.05.20</div>
<div style="left:616px;top:231px;width:63px;height:17px;overflow:hidden"><div style="left:3px;top:3.69px;font-size:11px;line-height:11px;color:#000;letter-spacing:-0.1px;white-space:nowrap;">DATE</div></div>
<div style="left:679px;top:234.69px;font-size:11px;line-height:11px;color:#000;letter-spacing:0px;white-space:nowrap;width:37px;text-align:right;">19</div>
<div style="left:773px;top:234.69px;font-size:11px;line-height:11px;color:#000;letter-spacing:0px;white-space:nowrap;width:52px;text-align:right;">6</div>
<div style="left:884px;top:234px;width:12px;height:12px;background:#fff;border-top:2px solid #6a6a6a;border-left:2px solid #6a6a6a;border-right:1px solid #d4d4d4;border-bottom:1px solid #d4d4d4;box-sizing:border-box"></div>
<div style="left:245px;top:252.69px;font-size:11px;line-height:11px;color:#000;letter-spacing:-0.3px;white-space:nowrap;width:16px;text-align:right;">7</div>
<div style="left:268.5px;top:252.69px;font-size:11px;line-height:11px;color:#000;letter-spacing:-0.33px;white-space:nowrap;">JOB_ID</div>
<div style="left:424px;top:252px;width:12px;height:12px;background:#fff;border-top:2px solid #6a6a6a;border-left:2px solid #6a6a6a;border-right:1px solid #d4d4d4;border-bottom:1px solid #d4d4d4;box-sizing:border-box"></div>
<div style="left:495px;top:252px;width:12px;height:12px;background:#fff;border-top:2px solid #6a6a6a;border-left:2px solid #6a6a6a;border-right:1px solid #d4d4d4;border-bottom:1px solid #d4d4d4;box-sizing:border-box"></div>
<div style="left:525px;top:252px;width:12px;height:12px;background:#fff;border-top:2px solid #6a6a6a;border-left:2px solid #6a6a6a;border-right:1px solid #d4d4d4;border-bottom:1px solid #d4d4d4;box-sizing:border-box"></div><svg style="position:absolute;left:525px;top:252px" width="12" height="12" viewBox="0 0 12 12"><path d="M3 5.5 L5 8 L9.5 3" fill="none" stroke="#000" stroke-width="2"/></svg>
<div style="left:548px;top:252px;width:12px;height:12px;background:#fff;border-top:2px solid #6a6a6a;border-left:2px solid #6a6a6a;border-right:1px solid #d4d4d4;border-bottom:1px solid #d4d4d4;box-sizing:border-box"></div><svg style="position:absolute;left:548px;top:252px" width="12" height="12" viewBox="0 0 12 12"><path d="M3 5.5 L5 8 L9.5 3" fill="none" stroke="#000" stroke-width="2"/></svg>
<div style="left:570px;top:252.69px;font-size:11px;line-height:11px;color:#000;letter-spacing:-0.17px;white-space:nowrap;">08.05.20</div>
<div style="left:616px;top:249px;width:63px;height:17px;overflow:hidden"><div style="left:3px;top:3.69px;font-size:11px;line-height:11px;color:#000;letter-spacing:-0.1px;white-space:nowrap;">VARCHAR2</div></div>
<div style="left:679px;top:252.69px;font-size:11px;line-height:11px;color:#000;letter-spacing:0px;white-space:nowrap;width:37px;text-align:right;">10</div>
<div style="left:773px;top:252.69px;font-size:11px;line-height:11px;color:#000;letter-spacing:0px;white-space:nowrap;width:52px;text-align:right;">7</div>
<div style="left:884px;top:252px;width:12px;height:12px;background:#fff;border-top:2px solid #6a6a6a;border-left:2px solid #6a6a6a;border-right:1px solid #d4d4d4;border-bottom:1px solid #d4d4d4;box-sizing:border-box"></div>
<div style="left:245px;top:270.69px;font-size:11px;line-height:11px;color:#000;letter-spacing:-0.3px;white-space:nowrap;width:16px;text-align:right;">8</div>
<div style="left:268.5px;top:270.69px;font-size:11px;line-height:11px;color:#000;letter-spacing:-0.33px;white-space:nowrap;">SALARY</div>
<div style="left:424px;top:270px;width:12px;height:12px;background:#fff;border-top:2px solid #6a6a6a;border-left:2px solid #6a6a6a;border-right:1px solid #d4d4d4;border-bottom:1px solid #d4d4d4;box-sizing:border-box"></div>
<div style="left:495px;top:270px;width:12px;height:12px;background:#fff;border-top:2px solid #6a6a6a;border-left:2px solid #6a6a6a;border-right:1px solid #d4d4d4;border-bottom:1px solid #d4d4d4;box-sizing:border-box"></div>
<div style="left:525px;top:270px;width:12px;height:12px;background:#fff;border-top:2px solid #6a6a6a;border-left:2px solid #6a6a6a;border-right:1px solid #d4d4d4;border-bottom:1px solid #d4d4d4;box-sizing:border-box"></div>
<div style="left:548px;top:270px;width:12px;height:12px;background:#fff;border-top:2px solid #6a6a6a;border-left:2px solid #6a6a6a;border-right:1px solid #d4d4d4;border-bottom:1px solid #d4d4d4;box-sizing:border-box"></div>
<div style="left:570px;top:270.69px;font-size:11px;line-height:11px;color:#000;letter-spacing:-0.17px;white-space:nowrap;">08.05.20</div>
<div style="left:616px;top:267px;width:63px;height:17px;overflow:hidden"><div style="left:3px;top:3.69px;font-size:11px;line-height:11px;color:#000;letter-spacing:-0.1px;white-space:nowrap;">DECIMAL</div></div>
<div style="left:679px;top:270.69px;font-size:11px;line-height:11px;color:#000;letter-spacing:0px;white-space:nowrap;width:37px;text-align:right;">8</div>
<div style="left:718px;top:270.69px;font-size:11px;line-height:11px;color:#000;letter-spacing:0px;white-space:nowrap;width:52px;text-align:right;">2</div>
<div style="left:773px;top:270.69px;font-size:11px;line-height:11px;color:#000;letter-spacing:0px;white-space:nowrap;width:52px;text-align:right;">8</div>
<div style="left:884px;top:270px;width:12px;height:12px;background:#fff;border-top:2px solid #6a6a6a;border-left:2px solid #6a6a6a;border-right:1px solid #d4d4d4;border-bottom:1px solid #d4d4d4;box-sizing:border-box"></div>
<div style="left:245px;top:288.69px;font-size:11px;line-height:11px;color:#000;letter-spacing:-0.3px;white-space:nowrap;width:16px;text-align:right;">9</div>
<div style="left:268.5px;top:288.69px;font-size:11px;line-height:11px;color:#000;letter-spacing:-0.33px;white-space:nowrap;">COMMISSION_PCT</div>
<div style="left:424px;top:288px;width:12px;height:12px;background:#fff;border-top:2px solid #6a6a6a;border-left:2px solid #6a6a6a;border-right:1px solid #d4d4d4;border-bottom:1px solid #d4d4d4;box-sizing:border-box"></div>
<div style="left:495px;top:288px;width:12px;height:12px;background:#fff;border-top:2px solid #6a6a6a;border-left:2px solid #6a6a6a;border-right:1px solid #d4d4d4;border-bottom:1px solid #d4d4d4;box-sizing:border-box"></div>
<div style="left:525px;top:288px;width:12px;height:12px;background:#fff;border-top:2px solid #6a6a6a;border-left:2px solid #6a6a6a;border-right:1px solid #d4d4d4;border-bottom:1px solid #d4d4d4;box-sizing:border-box"></div>
<div style="left:548px;top:288px;width:12px;height:12px;background:#fff;border-top:2px solid #6a6a6a;border-left:2px solid #6a6a6a;border-right:1px solid #d4d4d4;border-bottom:1px solid #d4d4d4;box-sizing:border-box"></div>
<div style="left:570px;top:288.69px;font-size:11px;line-height:11px;color:#000;letter-spacing:-0.17px;white-space:nowrap;">08.05.20</div>
<div style="left:616px;top:285px;width:63px;height:17px;overflow:hidden"><div style="left:3px;top:3.69px;font-size:11px;line-height:11px;color:#000;letter-spacing:-0.1px;white-space:nowrap;">DECIMAL</div></div>
<div style="left:679px;top:288.69px;font-size:11px;line-height:11px;color:#000;letter-spacing:0px;white-space:nowrap;width:37px;text-align:right;">2</div>
<div style="left:718px;top:288.69px;font-size:11px;line-height:11px;color:#000;letter-spacing:0px;white-space:nowrap;width:52px;text-align:right;">2</div>
<div style="left:773px;top:288.69px;font-size:11px;line-height:11px;color:#000;letter-spacing:0px;white-space:nowrap;width:52px;text-align:right;">9</div>
<div style="left:884px;top:288px;width:12px;height:12px;background:#fff;border-top:2px solid #6a6a6a;border-left:2px solid #6a6a6a;border-right:1px solid #d4d4d4;border-bottom:1px solid #d4d4d4;box-sizing:border-box"></div>
<div style="left:245px;top:306.69px;font-size:11px;line-height:11px;color:#000;letter-spacing:-0.3px;white-space:nowrap;width:16px;text-align:right;">10</div>
<div style="left:268.5px;top:306.69px;font-size:11px;line-height:11px;color:#000;letter-spacing:-0.33px;white-space:nowrap;">MANAGER_ID</div>
<div style="left:424px;top:306px;width:12px;height:12px;background:#fff;border-top:2px solid #6a6a6a;border-left:2px solid #6a6a6a;border-right:1px solid #d4d4d4;border-bottom:1px solid #d4d4d4;box-sizing:border-box"></div>
<div style="left:495px;top:306px;width:12px;height:12px;background:#fff;border-top:2px solid #6a6a6a;border-left:2px solid #6a6a6a;border-right:1px solid #d4d4d4;border-bottom:1px solid #d4d4d4;box-sizing:border-box"></div>
<div style="left:525px;top:306px;width:12px;height:12px;background:#fff;border-top:2px solid #6a6a6a;border-left:2px solid #6a6a6a;border-right:1px solid #d4d4d4;border-bottom:1px solid #d4d4d4;box-sizing:border-box"></div><svg style="position:absolute;left:525px;top:306px" width="12" height="12" viewBox="0 0 12 12"><path d="M3 5.5 L5 8 L9.5 3" fill="none" stroke="#000" stroke-width="2"/></svg>
<div style="left:548px;top:306px;width:12px;height:12px;background:#fff;border-top:2px solid #6a6a6a;border-left:2px solid #6a6a6a;border-right:1px solid #d4d4d4;border-bottom:1px solid #d4d4d4;box-sizing:border-box"></div>
<div style="left:570px;top:306.69px;font-size:11px;line-height:11px;color:#000;letter-spacing:-0.17px;white-space:nowrap;">08.05.20</div>
<div style="left:616px;top:303px;width:63px;height:17px;overflow:hidden"><div style="left:3px;top:3.69px;font-size:11px;line-height:11px;color:#000;letter-spacing:-0.1px;white-space:nowrap;">DECIMAL</div></div>
<div style="left:679px;top:306.69px;font-size:11px;line-height:11px;color:#000;letter-spacing:0px;white-space:nowrap;width:37px;text-align:right;">6</div>
<div style="left:773px;top:306.69px;font-size:11px;line-height:11px;color:#000;letter-spacing:0px;white-space:nowrap;width:52px;text-align:right;">10</div>
<div style="left:884px;top:306px;width:12px;height:12px;background:#fff;border-top:2px solid #6a6a6a;border-left:2px solid #6a6a6a;border-right:1px solid #d4d4d4;border-bottom:1px solid #d4d4d4;box-sizing:border-box"></div>
<div style="left:245px;top:324.69px;font-size:11px;line-height:11px;color:#000;letter-spacing:-0.3px;white-space:nowrap;width:16px;text-align:right;">11</div>
<div style="left:268.5px;top:324.69px;font-size:11px;line-height:11px;color:#000;letter-spacing:-0.33px;white-space:nowrap;">DEPARTMENT_ID</div>
<div style="left:424px;top:324px;width:12px;height:12px;background:#fff;border-top:2px solid #6a6a6a;border-left:2px solid #6a6a6a;border-right:1px solid #d4d4d4;border-bottom:1px solid #d4d4d4;box-sizing:border-box"></div>
<div style="left:495px;top:324px;width:12px;height:12px;background:#fff;border-top:2px solid #6a6a6a;border-left:2px solid #6a6a6a;border-right:1px solid #d4d4d4;border-bottom:1px solid #d4d4d4;box-sizing:border-box"></div>
<div style="left:525px;top:324px;width:12px;height:12px;background:#fff;border-top:2px solid #6a6a6a;border-left:2px solid #6a6a6a;border-right:1px solid #d4d4d4;border-bottom:1px solid #d4d4d4;box-sizing:border-box"></div><svg style="position:absolute;left:525px;top:324px" width="12" height="12" viewBox="0 0 12 12"><path d="M3 5.5 L5 8 L9.5 3" fill="none" stroke="#000" stroke-width="2"/></svg>
<div style="left:548px;top:324px;width:12px;height:12px;background:#fff;border-top:2px solid #6a6a6a;border-left:2px solid #6a6a6a;border-right:1px solid #d4d4d4;border-bottom:1px solid #d4d4d4;box-sizing:border-box"></div>
<div style="left:570px;top:324.69px;font-size:11px;line-height:11px;color:#000;letter-spacing:-0.17px;white-space:nowrap;">08.05.20</div>
<div style="left:616px;top:321px;width:63px;height:17px;overflow:hidden"><div style="left:3px;top:3.69px;font-size:11px;line-height:11px;color:#000;letter-spacing:-0.1px;white-space:nowrap;">DECIMAL</div></div>
<div style="left:679px;top:324.69px;font-size:11px;line-height:11px;color:#000;letter-spacing:0px;white-space:nowrap;width:37px;text-align:right;">4</div>
<div style="left:773px;top:324.69px;font-size:11px;line-height:11px;color:#000;letter-spacing:0px;white-space:nowrap;width:52px;text-align:right;">11</div>
<div style="left:884px;top:324px;width:12px;height:12px;background:#fff;border-top:2px solid #6a6a6a;border-left:2px solid #6a6a6a;border-right:1px solid #d4d4d4;border-bottom:1px solid #d4d4d4;box-sizing:border-box"></div>
<div style="left:245px;top:345px;width:707px;height:16px;background-color:#f0efea;background-image:repeating-conic-gradient(#ffffff 0 25%,#dcdad2 0 50%);background-size:2px 2px"></div>
<div style="left:245px;top:345px;width:15px;height:16px;background:#d4d0c8;border-top:1px solid #fff;border-left:1px solid #fff;border-right:1px solid #404040;border-bottom:1px solid #404040;box-sizing:border-box;box-shadow:inset -1px -1px #808080"></div>
<div style="left:260px;top:345px;width:17px;height:16px;background:#d4d0c8;border-top:1px solid #fff;border-left:1px solid #fff;border-right:1px solid #404040;border-bottom:1px solid #404040;box-sizing:border-box;box-shadow:inset -1px -1px #808080"></div>
<div style="left:937px;top:345px;width:15px;height:16px;background:#d4d0c8;border-top:1px solid #fff;border-left:1px solid #fff;border-right:1px solid #404040;border-bottom:1px solid #404040;box-sizing:border-box;box-shadow:inset -1px -1px #808080"></div>
<svg style="position:absolute;left:250px;top:349px" width="6" height="8"><path d="M4 0 V7 L0.5 3.5 Z" fill="#000"/></svg>
<svg style="position:absolute;left:942px;top:349px" width="6" height="8"><path d="M0 0 V8 L4 4 Z" fill="#000"/></svg>
<div style="left:235px;top:362px;width:738px;height:6px;background:linear-gradient(#e2e4e6,#f8f8f8 40%,#f4f4f4 70%,#c8cacc)"></div>
<div style="left:235px;top:368px;width:738px;height:1px;background:#181c20"></div>
<div style="left:235px;top:369px;width:736px;height:216px;background:#89a7e3"></div>
<div style="left:971px;top:369px;width:1px;height:216px;background:#f6f8fb"></div>
<div style="left:247px;top:386px;width:607px;height:134px;border:1px solid #fff;box-sizing:border-box"></div>
<div style="left:253px;top:380px;width:148px;height:10px;background:#89a7e3"></div>
<div style="left:255.7px;top:380.69px;font-size:11px;line-height:11px;color:#0a1030;letter-spacing:-0.1px;">Data Types Character / Binary</div>
<div style="left:258px;top:397px;width:84px;height:16px;background:linear-gradient(#fbfbfb,#efefef 45%,#e0e0e0 60%,#d2d2d2);border:1px solid;border-color:#d4d6da #9a9ea6 #8e9298 #d4d6da;border-radius:2px;box-sizing:border-box;box-shadow:inset 1px 1px #fff"></div>
<div style="left:261px;top:399px;width:79px;height:12px;border:1px dotted #000;box-sizing:border-box"></div>
<div style="left:258px;top:400.0px;width:84px;text-align:center;font-size:11px;line-height:12px;color:#000;letter-spacing:-0.1px">Consonant</div>
<div style="left:258px;top:418px;width:84px;height:16px;background:linear-gradient(#fbfbfb,#efefef 45%,#e0e0e0 60%,#d2d2d2);border:1px solid;border-color:#d4d6da #9a9ea6 #8e9298 #d4d6da;border-radius:2px;box-sizing:border-box;box-shadow:inset 1px 1px #fff"></div>
<div style="left:258px;top:421.0px;width:84px;text-align:center;font-size:11px;line-height:12px;color:#000;letter-spacing:-0.1px">Blank</div>
<div style="left:345px;top:397px;width:84px;height:16px;background:linear-gradient(#fbfbfb,#efefef 45%,#e0e0e0 60%,#d2d2d2);border:1px solid;border-color:#d4d6da #9a9ea6 #8e9298 #d4d6da;border-radius:2px;box-sizing:border-box;box-shadow:inset 1px 1px #fff"></div>
<div style="left:345px;top:400.0px;width:84px;text-align:center;font-size:11px;line-height:12px;color:#000;letter-spacing:-0.1px">Vowel</div>
<div style="left:345px;top:418px;width:84px;height:16px;background:linear-gradient(#fbfbfb,#efefef 45%,#e0e0e0 60%,#d2d2d2);border:1px solid;border-color:#d4d6da #9a9ea6 #8e9298 #d4d6da;border-radius:2px;box-sizing:border-box;box-shadow:inset 1px 1px #fff"></div>
<div style="left:345px;top:421.0px;width:84px;text-align:center;font-size:11px;line-height:12px;color:#000;letter-spacing:-0.1px">Date Value</div>
<div style="left:432px;top:397px;width:84px;height:16px;background:linear-gradient(#fbfbfb,#efefef 45%,#e0e0e0 60%,#d2d2d2);border:1px solid;border-color:#d4d6da #9a9ea6 #8e9298 #d4d6da;border-radius:2px;box-sizing:border-box;box-shadow:inset 1px 1px #fff"></div>
<div style="left:432px;top:400.0px;width:84px;text-align:center;font-size:11px;line-height:12px;color:#000;letter-spacing:-0.1px">Dont care</div>
<div style="left:432px;top:418px;width:84px;height:16px;background:linear-gradient(#fbfbfb,#efefef 45%,#e0e0e0 60%,#d2d2d2);border:1px solid;border-color:#d4d6da #9a9ea6 #8e9298 #d4d6da;border-radius:2px;box-sizing:border-box;box-shadow:inset 1px 1px #fff"></div>
<div style="left:432px;top:421.0px;width:84px;text-align:center;font-size:11px;line-height:12px;color:#000;letter-spacing:-0.1px">Random No.</div>
<div style="left:519px;top:397px;width:84px;height:16px;background:linear-gradient(#fbfbfb,#efefef 45%,#e0e0e0 60%,#d2d2d2);border:1px solid;border-color:#d4d6da #9a9ea6 #8e9298 #d4d6da;border-radius:2px;box-sizing:border-box;box-shadow:inset 1px 1px #fff"></div>
<div style="left:519px;top:400.0px;width:84px;text-align:center;font-size:11px;line-height:12px;color:#000;letter-spacing:-0.1px">Seq. Number</div>
<div style="left:519px;top:418px;width:84px;height:16px;background:linear-gradient(#fbfbfb,#efefef 45%,#e0e0e0 60%,#d2d2d2);border:1px solid;border-color:#d4d6da #9a9ea6 #8e9298 #d4d6da;border-radius:2px;box-sizing:border-box;box-shadow:inset 1px 1px #fff"></div>
<div style="left:519px;top:421.0px;width:84px;text-align:center;font-size:11px;line-height:12px;color:#000;letter-spacing:-0.1px">Seq. Letter</div>
<div style="left:706.6px;top:403.69px;font-size:11px;line-height:11px;color:#0a1030;letter-spacing:-0.1px;">Custom Text</div>
<div style="left:705px;top:418px;width:138px;height:20px;background:#fff;border:1px solid #b8c4dc;box-shadow:inset 1px 1px #e0e4ea;box-sizing:border-box"></div>
<div style="left:937px;top:395px;width:16px;height:16px;background:linear-gradient(90deg,#e8e8dc,#f0f0ec 40%,#e6e6e0);box-shadow:0 0 1px #a0a8c0"></div>
<div style="left:941px;top:408px;width:7px;height:1px;background:#000"></div>
<div style="left:259px;top:446px;width:584px;height:37px;border:1px solid #fff;box-sizing:border-box"></div>
<div style="left:264px;top:440px;width:58px;height:10px;background:#89a7e3"></div>
<div style="left:266.9px;top:441.69px;font-size:11px;line-height:11px;color:#0a1030;">Word Type</div>
<div style="left:267.6px;top:459px;width:12px;height:12px;border-radius:50%;background:radial-gradient(circle at 40% 35%,#ffffff,#f2f2ea 60%,#d8d8d0);box-shadow:0 0 0 0.5px #c8ccd8"></div>
<div style="left:271.6px;top:463px;width:4px;height:4px;border-radius:50%;background:#1a2060"></div>
<div style="left:285.7px;top:459.69px;font-size:11px;line-height:11px;color:#0a1030;letter-spacing:-0.15px;">None</div>
<div style="left:345.7px;top:459px;width:12px;height:12px;border-radius:50%;background:radial-gradient(circle at 40% 35%,#ffffff,#f2f2ea 60%,#d8d8d0);box-shadow:0 0 0 0.5px #c8ccd8"></div>
<div style="left:363.5px;top:459.69px;font-size:11px;line-height:11px;color:#0a1030;letter-spacing:-0.15px;">Uppercase</div>
<div style="left:465.6px;top:459px;width:12px;height:12px;border-radius:50%;background:radial-gradient(circle at 40% 35%,#ffffff,#f2f2ea 60%,#d8d8d0);box-shadow:0 0 0 0.5px #c8ccd8"></div>
<div style="left:483px;top:459.69px;font-size:11px;line-height:11px;color:#0a1030;letter-spacing:-0.15px;">Initial Capital Ltrs.</div>
<div style="left:586px;top:459px;width:12px;height:12px;border-radius:50%;background:radial-gradient(circle at 40% 35%,#ffffff,#f2f2ea 60%,#d8d8d0);box-shadow:0 0 0 0.5px #c8ccd8"></div>
<div style="left:603px;top:459.69px;font-size:11px;line-height:11px;color:#0a1030;letter-spacing:-0.15px;">Lowercase</div>
<div style="left:706px;top:459px;width:12px;height:12px;border-radius:50%;background:radial-gradient(circle at 40% 35%,#ffffff,#f2f2ea 60%,#d8d8d0);box-shadow:0 0 0 0.5px #c8ccd8"></div>
<div style="left:723px;top:459.69px;font-size:11px;line-height:11px;color:#0a1030;letter-spacing:-0.15px;">Mixed</div>
<div style="left:270.6px;top:496.69px;font-size:11px;line-height:11px;color:#0a1030;letter-spacing:-0.4px;">Sample:</div>
<div style="left:345px;top:490px;width:333px;height:21px;background:#fff;border:1px solid #b8c4dc;box-sizing:border-box"></div>
<div style="left:705px;top:494px;width:63px;height:17px;background:linear-gradient(#fbfbfb,#efefef 45%,#e0e0e0 60%,#d2d2d2);border:1px solid;border-color:#d4d6da #9a9ea6 #8e9298 #d4d6da;border-radius:2px;box-sizing:border-box;box-shadow:inset 1px 1px #fff"></div>
<div style="left:705px;top:495.2px;width:63px;text-align:center;font-size:11px;line-height:12px;color:#000;letter-spacing:-0.1px">Clear</div>
<div style="left:775px;top:494px;width:62px;height:17px;background:linear-gradient(#f4f4f4,#eaeaea);border:1px solid;border-color:#dcdee2 #b8bcc4 #b4b8c0 #dcdee2;border-radius:2px;box-sizing:border-box;box-shadow:inset 1px 1px #fff"></div>
<div style="left:775px;top:495.2px;width:62px;text-align:center;font-size:11px;line-height:12px;color:#9a9ea6;letter-spacing:-0.1px">Save</div>
<div style="left:246px;top:550.69px;font-size:11px;line-height:11px;color:#0a1030;letter-spacing:-0.3px;">Formula Name</div>
<div style="left:345px;top:544px;width:333px;height:21px;background:#fff;border:1px solid #c8ccd4;box-sizing:border-box"></div>
<div style="left:662px;top:545px;width:1px;height:19px;background:#dcdfe4"></div>
<svg style="position:absolute;left:666px;top:552px" width="7" height="4"><path d="M0 0 H7 L3.5 4 Z" fill="#505460"/></svg>
<div style="left:235px;top:585px;width:736px;height:1px;background:#fafbfc"></div>
<div style="left:240px;top:591px;width:47px;height:27px;background:#fff;border:1px solid #c0c4ca;border-radius:3px;box-sizing:border-box"></div>
<div style="left:244.9px;top:599.69px;font-size:11px;line-height:11px;color:#222;letter-spacing:-0.4px;">Session</div>
<div style="left:294.6px;top:599.69px;font-size:11px;line-height:11px;color:#222;letter-spacing:-0.3px;">Scripting</div>
<div style="left:348.6px;top:599.69px;font-size:11px;line-height:11px;color:#222;letter-spacing:-0.2px;">Preview</div>
<div style="left:399.8px;top:599.69px;font-size:11px;line-height:11px;color:#222;letter-spacing:-0.2px;">Data</div>
<div style="left:342px;top:595px;width:1px;height:22px;background:#c4c8ce"></div>
<div style="left:393px;top:595px;width:1px;height:22px;background:#c4c8ce"></div>
<div style="left:429px;top:595px;width:1px;height:22px;background:#c4c8ce"></div>
<svg style="position:absolute;left:944px;top:599px" width="22" height="11" viewBox="0 0 22 11">
<path d="M5.5 1 L1 5.5 L5.5 10 Z" fill="none" stroke="#7a7e86"/>
<path d="M15.5 1 L20 5.5 L15.5 10 Z" fill="none" stroke="#7a7e86"/>
</svg>
<div style="left:1px;top:623px;width:974px;height:1px;background:#7c8088"></div>
<div style="left:1px;top:624px;width:974px;height:16px;background:linear-gradient(#f4f5f7,#e8eaed 60%,#dcdfe3)"></div>
<div style="left:1px;top:640px;width:974px;height:1px;background:#a4a8ae"></div>
<div style="left:886px;top:625px;width:1px;height:15px;background:#8c9096"></div>
<div style="left:907px;top:625px;width:1px;height:15px;background:#8c9096"></div>
<div style="left:937px;top:625px;width:1px;height:15px;background:#8c9096"></div>
<svg style="position:absolute;left:962px;top:629px" width="12" height="11" viewBox="0 0 12 11">
<rect x="9" y="1" width="2" height="2" fill="#a0a4aa"/><rect x="6" y="4" width="2" height="2" fill="#a0a4aa"/><rect x="9" y="4" width="2" height="2" fill="#a0a4aa"/>
<rect x="3" y="7" width="2" height="2" fill="#a0a4aa"/><rect x="6" y="7" width="2" height="2" fill="#a0a4aa"/><rect x="9" y="7" width="2" height="2" fill="#a0a4aa"/>
</svg>
</body></html>
